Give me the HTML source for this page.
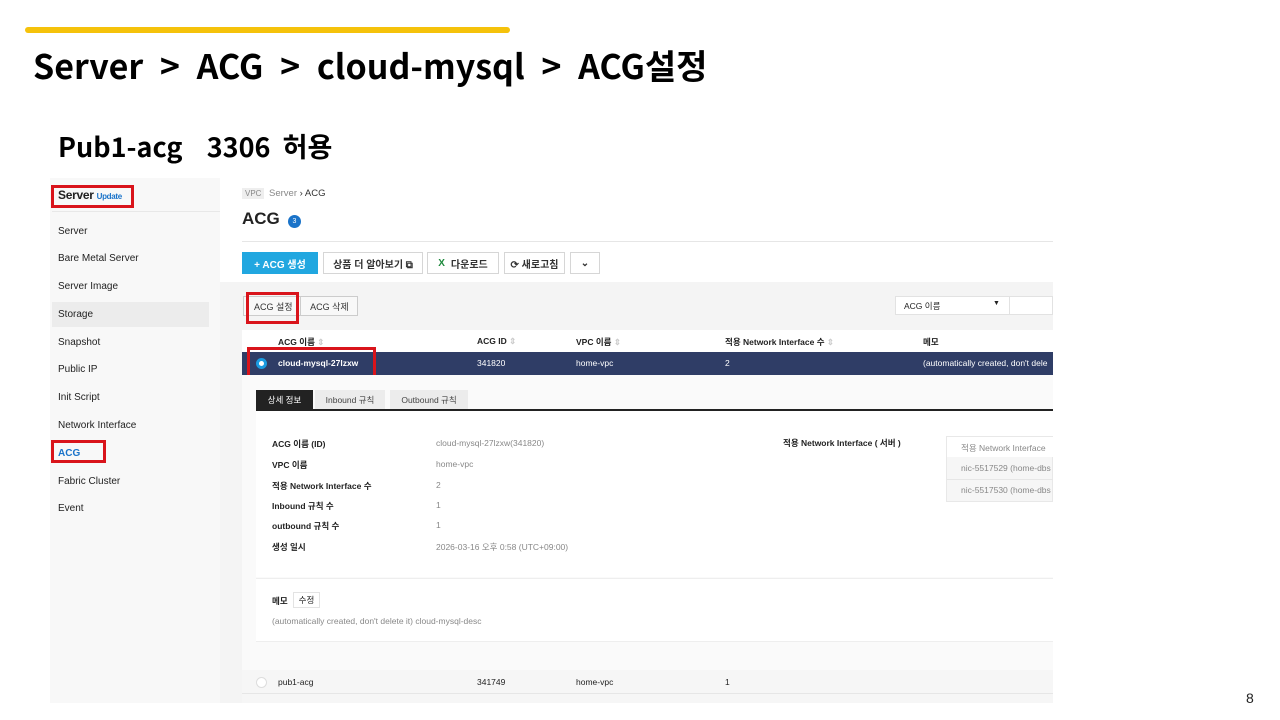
<!DOCTYPE html>
<html><head><meta charset="utf-8"><style>
*{margin:0;padding:0;box-sizing:border-box}
body{width:1280px;height:720px;background:#fff;position:relative;overflow:hidden;font-family:"Liberation Sans","Noto Sans CJK KR",sans-serif;color:#222}
.a{position:absolute;white-space:nowrap}
.t{font-family:"Noto Sans CJK KR","Liberation Sans",sans-serif;font-weight:700;color:#000}
.s{font-size:10px;color:#222}
.rb{position:absolute;border:3px solid #d9141b}
.btn{position:absolute;border:1px solid #d6d6d6;background:#fff;font-size:10px;font-weight:700;display:flex;align-items:center;justify-content:center;color:#333}
.sm{font-size:8.5px}
.g{color:#888}
</style></head><body>
<div class="a" style="left:25px;top:27px;width:485px;height:6px;background:#f5c20b;border-radius:3px"></div>
<div class="a t" style="left:33px;top:41px;font-size:34px;word-spacing:9px;line-height:48px">Server &gt; ACG &gt; cloud-mysql &gt; ACG설정</div>
<div class="a t" style="left:58px;top:126px;font-size:27px;line-height:40px;word-spacing:6px">Pub1-acg &nbsp;3306 허용</div>
<div class="a" style="left:1246px;top:690px;font-size:14px;color:#222">8</div>

<!-- screenshot -->
<div class="a" style="left:50px;top:178px;width:170px;height:525px;background:#f8f8f8"></div>
<div class="a" style="left:52px;top:211px;width:168px;height:1px;background:#e8e8e8"></div>
<div class="a" style="left:58px;top:188px;font-size:12px;font-weight:700;letter-spacing:-0.3px">Server <span style="font-size:8px;color:#1a73c9">Update</span></div>
<div class="rb" style="left:51px;top:185px;width:83px;height:23px"></div>
<div class="a" style="left:52px;top:302px;width:157px;height:25px;background:#ececec"></div>
<div class="a s" style="left:58px;top:226px">Server</div>
<div class="a s" style="left:58px;top:253px">Bare Metal Server</div>
<div class="a s" style="left:58px;top:281px">Server Image</div>
<div class="a s" style="left:58px;top:309px">Storage</div>
<div class="a s" style="left:58px;top:337px">Snapshot</div>
<div class="a s" style="left:58px;top:364px">Public IP</div>
<div class="a s" style="left:58px;top:392px">Init Script</div>
<div class="a s" style="left:58px;top:420px">Network Interface</div>
<div class="a s" style="left:58px;top:448px;color:#1a73c9;font-weight:700">ACG</div>
<div class="rb" style="left:51px;top:440px;width:55px;height:23px"></div>
<div class="a s" style="left:58px;top:476px">Fabric Cluster</div>
<div class="a s" style="left:58px;top:503px">Event</div>

<div class="a" style="left:220px;top:178px;width:833px;height:104px;background:#fff"></div>
<div class="a" style="left:242px;top:188px;font-size:8px;background:#eee;color:#888;padding:1px 3px">VPC</div>
<div class="a" style="left:269px;top:188px;font-size:9.5px;color:#888">Server <span style="color:#333">›</span> <span style="color:#333">ACG</span></div>
<div class="a" style="left:242px;top:209px;font-size:17px;font-weight:700">ACG</div>
<div class="a" style="left:288px;top:215px;width:13px;height:13px;border-radius:50%;background:#1a73c9;color:#fff;font-size:7px;text-align:center;line-height:13px">3</div>
<div class="a" style="left:242px;top:241px;width:811px;height:1px;background:#e6e6e6"></div>
<div class="btn" style="left:242px;top:252px;width:76px;height:22px;background:#21a7e0;border-color:#21a7e0;color:#fff">+ ACG 생성</div>
<div class="btn" style="left:323px;top:252px;width:100px;height:22px">상품 더 알아보기 ⧉</div>
<div class="btn" style="left:427px;top:252px;width:72px;height:22px"><span style="color:#1e8a3d;margin-right:6px">X</span>다운로드</div>
<div class="btn" style="left:504px;top:252px;width:61px;height:22px">⟳ 새로고침</div>
<div class="btn" style="left:570px;top:252px;width:30px;height:22px">⌄</div>

<div class="a" style="left:220px;top:282px;width:833px;height:421px;background:#f4f4f4"></div>
<div class="btn" style="left:243px;top:296px;width:115px;height:20px;background:#f8f8f8;border-color:#ccc;font-weight:400;font-size:9px;justify-content:flex-start;padding-left:10px">ACG 설정 &nbsp;&nbsp;&nbsp;&nbsp;&nbsp; ACG 삭제</div>
<div class="a" style="left:300px;top:297px;width:1px;height:18px;background:#ccc"></div>
<div class="rb" style="left:246px;top:292px;width:53px;height:32px"></div>
<div class="a" style="left:895px;top:296px;width:158px;height:19px;background:#fff;border:1px solid #e2e2e2"></div>
<div class="a sm" style="left:904px;top:300px">ACG 이름</div>
<div class="a" style="left:993px;top:300px;font-size:7px">▼</div>
<div class="a" style="left:1009px;top:296px;width:1px;height:19px;background:#e2e2e2"></div>

<div class="a" style="left:242px;top:330px;width:811px;height:22px;background:#fff"></div>
<div class="a sm" style="left:278px;top:336px;font-weight:700">ACG 이름 <span style="color:#ccc">⇕</span></div>
<div class="a sm" style="left:477px;top:336px;font-weight:700">ACG ID <span style="color:#ccc">⇕</span></div>
<div class="a sm" style="left:576px;top:336px;font-weight:700">VPC 이름 <span style="color:#ccc">⇕</span></div>
<div class="a sm" style="left:725px;top:336px;font-weight:700">적용 Network Interface 수 <span style="color:#ccc">⇕</span></div>
<div class="a sm" style="left:923px;top:336px;font-weight:700">메모</div>
<div class="a" style="left:242px;top:352px;width:811px;height:23px;background:#2f3d66"></div>
<div class="a" style="left:256px;top:358px;width:11px;height:11px;border-radius:50%;background:#fff;border:3px solid #1a9be0"></div>
<div class="a sm" style="left:278px;top:358px;color:#fff;font-weight:700">cloud-mysql-27lzxw</div>
<div class="a sm" style="left:477px;top:358px;color:#fff">341820</div>
<div class="a sm" style="left:576px;top:358px;color:#fff">home-vpc</div>
<div class="a sm" style="left:725px;top:358px;color:#fff">2</div>
<div class="a sm" style="left:923px;top:358px;color:#fff">(automatically created, don't dele</div>
<div class="rb" style="left:247px;top:347px;width:129px;height:31px"></div>

<div class="a" style="left:242px;top:375px;width:811px;height:295px;background:#fafafa"></div>
<div class="a sm" style="left:256px;top:390px;width:57px;height:20px;background:#222;color:#fff;text-align:center;line-height:20px">상세 정보</div>
<div class="a sm" style="left:315px;top:390px;width:70px;height:20px;background:#ececec;color:#444;text-align:center;line-height:20px">Inbound 규칙</div>
<div class="a sm" style="left:390px;top:390px;width:78px;height:20px;background:#ececec;color:#444;text-align:center;line-height:20px">Outbound 규칙</div>
<div class="a" style="left:256px;top:409px;width:797px;height:2px;background:#222"></div>
<div class="a" style="left:256px;top:411px;width:797px;height:166px;background:#fff"></div>
<div class="a sm" style="left:272px;top:438px;font-weight:700">ACG 이름 (ID)</div>
<div class="a sm" style="left:272px;top:459px;font-weight:700">VPC 이름</div>
<div class="a sm" style="left:272px;top:480px;font-weight:700">적용 Network Interface 수</div>
<div class="a sm" style="left:272px;top:500px;font-weight:700">Inbound 규칙 수</div>
<div class="a sm" style="left:272px;top:520px;font-weight:700">outbound 규칙 수</div>
<div class="a sm" style="left:272px;top:541px;font-weight:700">생성 일시</div>
<div class="a sm g" style="left:436px;top:438px">cloud-mysql-27lzxw(341820)</div>
<div class="a sm g" style="left:436px;top:459px">home-vpc</div>
<div class="a sm g" style="left:436px;top:480px">2</div>
<div class="a sm g" style="left:436px;top:500px">1</div>
<div class="a sm g" style="left:436px;top:520px">1</div>
<div class="a sm g" style="left:436px;top:541px">2026-03-16 오후 0:58 (UTC+09:00)</div>
<div class="a sm" style="left:783px;top:437px;font-weight:700">적용 Network Interface ( 서버 )</div>
<div class="a" style="left:946px;top:436px;width:107px;height:66px;border:1px solid #e8e8e8;background:#f6f6f6"></div>
<div class="a" style="left:947px;top:437px;width:106px;height:20px;background:#fff"></div>
<div class="a sm g" style="left:961px;top:442px">적용 Network Interface</div>
<div class="a sm g" style="left:961px;top:463px">nic-5517529 (home-dbs</div>
<div class="a sm g" style="left:961px;top:485px">nic-5517530 (home-dbs</div>
<div class="a" style="left:947px;top:479px;width:106px;height:1px;background:#e6e6e6"></div>
<div class="a" style="left:256px;top:578px;width:797px;height:64px;background:#fff;border-top:1px solid #eee;border-bottom:1px solid #eee"></div>
<div class="a sm" style="left:272px;top:595px;font-weight:700">메모</div>
<div class="a sm" style="left:293px;top:592px;width:27px;height:16px;border:1px solid #e3e3e3;text-align:center;line-height:14px">수정</div>
<div class="a sm g" style="left:272px;top:616px">(automatically created, don't delete it) cloud-mysql-desc</div>
<div class="a" style="left:242px;top:670px;width:811px;height:33px;background:#f6f6f6"></div>
<div class="a" style="left:256px;top:677px;width:11px;height:11px;border-radius:50%;background:#fff;border:1px solid #ddd"></div>
<div class="a sm" style="left:278px;top:677px">pub1-acg</div>
<div class="a sm" style="left:477px;top:677px">341749</div>
<div class="a sm" style="left:576px;top:677px">home-vpc</div>
<div class="a sm" style="left:725px;top:677px">1</div>
<div class="a" style="left:242px;top:693px;width:811px;height:1px;background:#e6e6e6"></div>
</body></html>
